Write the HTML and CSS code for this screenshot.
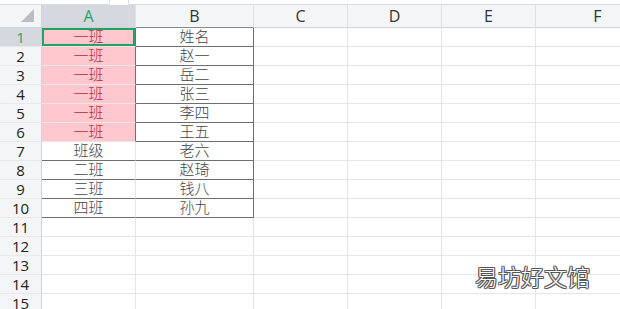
FILE: index.html
```html
<!DOCTYPE html>
<html lang="zh-CN">
<head>
  <meta charset="UTF-8" />
  <title>班级表</title>
  <link rel="stylesheet" href="styles.css">
</head>
<body>
  <div class="sheet">
    <div class="topbar">
      <div class="name-box"></div>
      <div class="formula-box"></div>
    </div>

    <table class="grid">
      <colgroup>
        <col class="c-head">
        <col class="c-a">
        <col class="c-b">
        <col class="c-std">
        <col class="c-std">
        <col class="c-std">
        <col class="c-last">
      </colgroup>
      <thead>
        <tr>
          <th class="corner"><span class="tri"></span></th>
          <th class="col-sel">A</th>
          <th class="b-dark">B</th>
          <th>C</th>
          <th>D</th>
          <th>E</th>
          <th>F</th>
        </tr>
      </thead>
      <tbody id="rows"></tbody>
    </table>

    <div class="watermark">易坊好文馆</div>
  </div>

  <script>
    const data = [
      ['一班', '姓名'],
      ['一班', '赵一'],
      ['一班', '岳二'],
      ['一班', '张三'],
      ['一班', '李四'],
      ['一班', '王五'],
      ['班级', '老六'],
      ['二班', '赵琦'],
      ['三班', '钱八'],
      ['四班', '孙九']
    ];

    const body = document.getElementById('rows');
    for (let i = 1; i <= 15; i++) {
      const tr = document.createElement('tr');
      const head = document.createElement('td');
      head.className = 'row-head' + (i === 1 ? ' row-sel' : '');
      head.textContent = i;
      tr.appendChild(head);

      const rec = data[i - 1];
      for (let c = 0; c < 6; c++) {
        const td = document.createElement('td');
        if (rec && c < 2) {
          td.textContent = rec[c];
          td.classList.add('in-table');
          if (c === 0 && i <= 6) td.classList.add('dup');
          if (c === 0 && i === 1) td.classList.add('active');
          if (c === 1) td.classList.add('col-b');
        }
        if (i === 10 && c < 2) td.classList.add('last');
        tr.appendChild(td);
      }
      body.appendChild(tr);
    }
  </script>
</body>
</html>
```

FILE: styles.css
```css
* {
  margin: 0;
  padding: 0;
  box-sizing: border-box;
}

body {
  width: 620px;
  height: 309px;
  overflow: hidden;
  background-color: #fff;
  font-family: "Noto Sans CJK SC", "Noto Sans", sans-serif;
}

.sheet {
  position: relative;
  height: 309px;
  overflow: hidden;
}

.topbar {
  display: flex;
  height: 5px;
  gap: 18px;
}

.name-box {
  width: 110px;
  border-bottom: 1px solid #d8dade;
  border-right: 1px solid #d8dade;
  border-bottom-right-radius: 2px;
}

.formula-box {
  flex: 1;
  border-bottom: 1px solid #d8dade;
  border-left: 1px solid #d8dade;
  border-bottom-left-radius: 2px;
}

.grid {
  table-layout: fixed;
  border-collapse: separate;
  border-spacing: 0;
  width: 660px;
}

.c-head { width: 42px; }
.c-a { width: 94px; }
.c-b { width: 118px; }
.c-std { width: 94px; }
.c-last { width: 124px; }

.grid th {
  height: 23px;
  background-color: #f4f5f7;
  border-right: 1px solid #dfe1e6;
  border-bottom: 1px solid #cfd2d8;
  font-family: "Open Sans", "Noto Sans", sans-serif;
  font-weight: 400;
  font-size: 16px;
  color: #333;
  text-align: center;
  line-height: 22px;
}

.grid th.corner {
  position: relative;
  border-right: 1px solid #cfd2d8;
}

.tri {
  position: absolute;
  right: 7px;
  bottom: 5px;
  width: 0;
  height: 0;
  border-left: 13px solid transparent;
  border-bottom: 13px solid #b9bcc2;
}

.grid th.col-sel {
  background-color: #d5d8de;
  color: #1fa463;
}

.grid th.b-dark {
  border-bottom-color: #8a8a8a;
}

.grid td {
  height: 19px;
  padding-bottom: 2px;
  border-right: 1px solid #e2e4ee;
  border-bottom: 1px solid #e2e4ee;
  font-size: 15px;
  line-height: 16px;
  color: #333;
  text-align: center;
  white-space: nowrap;
}

.grid td.row-head {
  padding-bottom: 0;
  line-height: 18px;
  background-color: #f4f5f7;
  border-right: 1px solid #cfd2d8;
  border-bottom: 1px solid #e6e8ec;
  font-family: "Open Sans", "Noto Sans", sans-serif;
  font-size: 15px;
  color: #222;
}

.grid td.row-sel {
  background-color: #d5d8de;
  color: #1fa463;
}

.grid td.in-table {
  border-bottom-color: #6e6e6e;
  color: #444;
  font-weight: 300;
}

.grid td.col-b {
  border-right-color: #6e6e6e;
}

.grid td.dup {
  background-color: #ffc7ce;
  color: #b8283a;
  border-right-color: #6e6e6e;
  border-bottom-color: #f0e4e6;
}

.grid td.active {
  box-shadow: inset 0 0 0 2px #21a366;
}

.grid td.last {
  border-bottom-color: #6e6e6e;
}

.watermark {
  position: absolute;
  left: 475px;
  top: 259px;
  font-size: 23px;
  font-weight: 300;
  color: #fff;
  text-shadow:
    1px 0 0 #555, -1px 0 0 #555, 0 1px 0 #555, 0 -1px 0 #555,
    1px 1px 0 #777, -1px -1px 0 #777, 1px -1px 0 #777, -1px 1px 0 #777;
}
```
